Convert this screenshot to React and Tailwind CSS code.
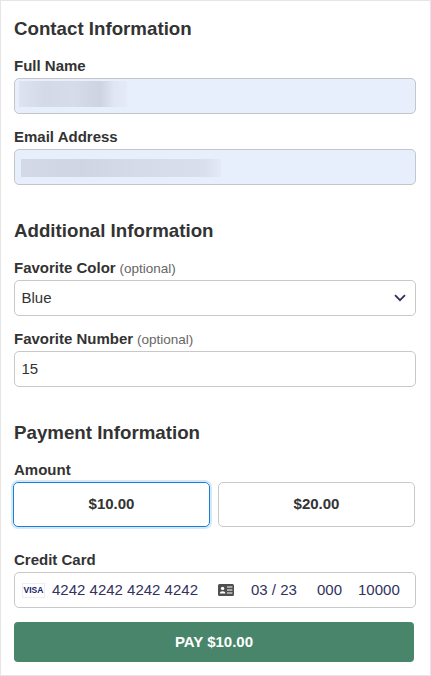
function Label({ children, optional }) {
  return (
    <label className="block h-[18px] text-[15px] leading-[18px] font-bold text-[#333333]">
      {children}
      {optional && <span className="font-normal text-[13.5px] leading-none text-[#666666]"> (optional)</span>}
    </label>
  );
}

function Heading({ children }) {
  return <h2 className="text-[18.72px] leading-[22px] font-bold text-[#333333]">{children}</h2>;
}

function BlurField({ children }) {
  return (
    <div className="h-9 mt-[3px] rounded-[5px] border border-[#c4c6cc] bg-[#e8effc] overflow-hidden flex">
      {children}
    </div>
  );
}

export default function App() {
  return (
    <div className="w-[431px] h-[676px] bg-white border border-[#e6e6e6] pl-[13px] pr-[14px] pt-[17px] font-['Liberation_Sans',Arial,sans-serif] overflow-hidden">
      <Heading>Contact Information</Heading>
      <div className="mt-[17px]"><Label>Full Name</Label></div>
      <BlurField>
        <div className="ml-[4px] mt-[2px] h-[26px] w-[108px] bg-[linear-gradient(90deg,#dde3ef_0%,#d3d9e6_25%,#d6dce9_50%,#cdd3e0_75%,#e0e6f3_88%,#e4eaf7_100%)]" />
      </BlurField>
      <div className="mt-[14px]"><Label>Email Address</Label></div>
      <BlurField>
        <div className="ml-[6px] mt-[9px] h-[18px] w-[200px] bg-[linear-gradient(90deg,#d3d9e6_0%,#cfd5e2_30%,#d5dbe8_60%,#d9dfec_92%,#e4eaf7_100%)]" />
      </BlurField>

      <div className="mt-[35px]"><Heading>Additional Information</Heading></div>
      <div className="mt-[17px]"><Label optional>Favorite Color</Label></div>
      <div className="h-9 mt-[3px] rounded-[5px] border border-[#c8c8c8] flex items-center justify-between pl-[6.5px] pr-[9px] text-[15px] text-[#333333]">
        <span>Blue</span>
        <svg viewBox="0 0 12 8" className="w-[12px] h-[8px]" fill="none" stroke="#32325d" strokeWidth="1.8">
          <path d="M1 1.2l5 5 5-5" />
        </svg>
      </div>
      <div className="mt-[14px]"><Label optional>Favorite Number</Label></div>
      <div className="h-9 mt-[3px] rounded-[5px] border border-[#c8c8c8] flex items-center pl-[6.5px] text-[15px] text-[#333333]">15</div>

      <div className="mt-[35px]"><Heading>Payment Information</Heading></div>
      <div className="mt-[17px]"><Label>Amount</Label></div>
      <div className="-ml-px mt-[3px] flex gap-[8px]">
        <button className="w-[197px] h-[45px] rounded-[5px] border border-[#1a7fd4] ring-2 ring-[#d5e8f8] text-[15px] font-bold text-[#333333]">$10.00</button>
        <button className="w-[197px] h-[45px] rounded-[5px] border border-[#c8c8c8] text-[15px] font-bold text-[#333333]">$20.00</button>
      </div>
      <div className="mt-[24px]"><Label>Credit Card</Label></div>
      <div className="h-9 mt-[3px] rounded-[5px] border border-[#c8c8c8] flex items-center pl-[7px] text-[15px] text-[#32325d]">
        <span className="w-[23px] h-[15px] border border-[#eeeeee] flex items-center justify-center text-[8.5px] leading-none font-bold text-[#14226b]">VISA</span>
        <span className="ml-[7px] w-[166px]">4242 4242 4242 4242</span>
        <svg viewBox="0 0 16 12" className="w-[16px] h-[12px]">
          <rect width="16" height="12" rx="1.5" fill="#4f4f4f" />
          <circle cx="4.6" cy="4.4" r="1.7" fill="#fff" />
          <path d="M1.8 9.4c0-3 5.6-3 5.6 0z" fill="#fff" />
          <path d="M9 3h5.4M9 6h5.4M9 9h5.4" stroke="#fff" strokeWidth="1.2" />
        </svg>
        <span className="ml-[17px] w-[66px]">03 / 23</span>
        <span>000</span>
        <span className="ml-[16px]">10000</span>
      </div>
      <button className="mt-[14px] w-[400px] h-[40px] rounded-[4px] bg-[#48856a] text-white text-[15px] font-bold">PAY $10.00</button>
    </div>
  );
}
